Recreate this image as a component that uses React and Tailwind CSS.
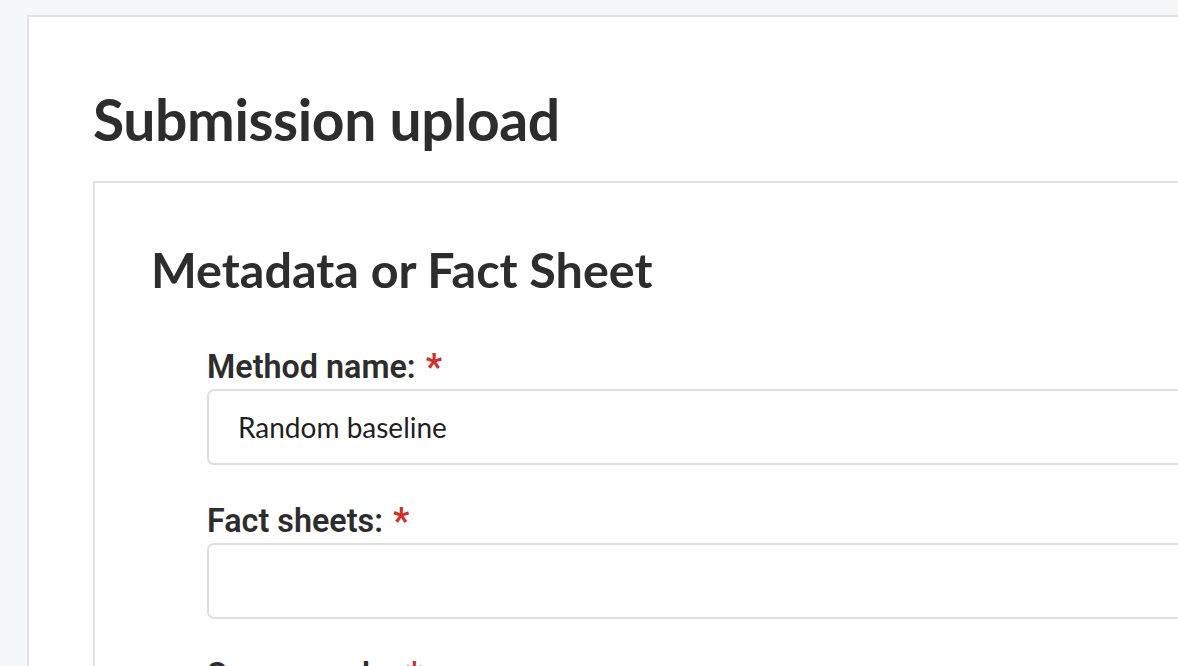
export default function App() {
  return (
    <div className="w-[1178px] h-[666px] overflow-hidden bg-[#f6f7f9] pl-[27px] pt-[15px]">
      <div className="w-[1300px] h-[800px] bg-white border-2 border-[#e2e2e2] pl-[64px] pt-[68px]">
        <h1 className="font-['Lato',sans-serif] font-bold text-[57px] leading-[68px] text-[#2d2d2d] tracking-[-0.4px]">
          Submission upload
        </h1>
        <div className="mt-[28px] w-[1200px] h-[600px] border-2 border-[#e2e2e2] pl-[56px] pt-[56px]">
          <h2 className="font-['Lato',sans-serif] font-bold text-[48.5px] leading-[60px] text-[#2d2d2d]">
            Metadata or Fact Sheet
          </h2>
          <div className="pl-[56px] mt-[48px] flex flex-col">
            <Field label="Method name:" value="Random baseline" />
            <Field label="Fact sheets:" value="" />
            <Field label="Source code:" value="" />
          </div>
        </div>
      </div>
    </div>
  );
}

function Field({ label, value }) {
  return (
    <div className="mb-[36px]">
      <div className="font-['Roboto',sans-serif] font-semibold text-[32.3px] leading-[40px] text-[#2d2d2d] flex items-start">
        <span>{label}</span>
        <span className="text-[#d0302b] ml-[10px] font-bold text-[36px] leading-[40px]">*</span>
      </div>
      <div className="mt-[2px] h-[76px] w-[1100px] border-2 border-[#dedede] rounded-[7px] flex items-center pl-[29px]">
        <span className="font-['Lato',sans-serif] text-[28px] text-[#1f1f1f]">{value}</span>
      </div>
    </div>
  );
}
